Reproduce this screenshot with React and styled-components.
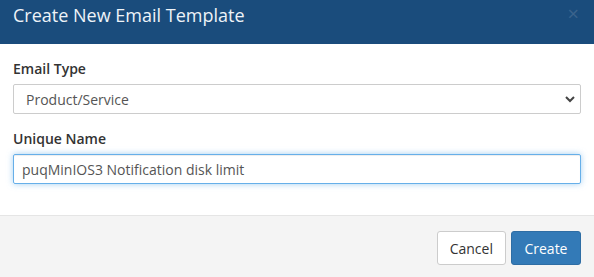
import React from 'react';
import styled, { createGlobalStyle } from 'styled-components';

const GlobalStyle = createGlobalStyle`
  html, body {
    margin: 0;
    padding: 0;
    background: #ffffff;
  }
  body {
    font-family: "Open Sans", "Liberation Sans", sans-serif;
    font-size: 14px;
    color: #333;
  }
`;

const Modal = styled.div`
  width: 594px;
  height: 277px;
  display: flex;
  flex-direction: column;
  background: #fff;
  overflow: hidden;
`;

const Header = styled.div`
  height: 44px;
  box-sizing: border-box;
  background: #1a4c7c;
  display: flex;
  align-items: flex-start;
  justify-content: space-between;
  padding: 2px 13px 0 13px;
`;

const Title = styled.h4`
  margin: 0;
  font-size: 18px;
  font-weight: 400;
  line-height: 26px;
  color: #eef3f8;
`;

const Close = styled.span`
  font-size: 20px;
  line-height: 20px;
  color: #3b638c;
  margin-top: 2px;
  margin-right: 2px;
`;

const Body = styled.div`
  padding: 15px 13px 0 13px;
  height: 172px;
  box-sizing: border-box;
  border-bottom: 1px solid #e5e5e5;
`;

const Group = styled.div`
  margin-bottom: 15px;
`;

const Label = styled.label`
  display: block;
  font-weight: 600;
  font-size: 14px;
  line-height: 20px;
  margin-bottom: 5px;
  color: #333;
`;

const SelectBox = styled.div`
  height: 30px;
  box-sizing: border-box;
  border: 1px solid #ccc;
  border-radius: 2px;
  display: flex;
  align-items: center;
  justify-content: space-between;
  padding: 0 4px 0 12px;
  font-size: 14px;
  color: #555;
`;

const Input = styled.div`
  height: 30px;
  box-sizing: border-box;
  border: 1px solid #66afe9;
  border-radius: 2px;
  display: flex;
  align-items: center;
  padding: 0 8px;
  font-size: 14px;
  color: #555;
  box-shadow: inset 0 1px 1px rgba(0, 0, 0, 0.075), 0 0 6px rgba(102, 175, 233, 0.6);
`;

const Footer = styled.div`
  flex: 1;
  background: #f4f4f4;
  display: flex;
  justify-content: flex-end;
  align-items: flex-start;
  gap: 5px;
  padding: 15px 13px 0 0;
`;

const Button = styled.button`
  height: 34px;
  box-sizing: border-box;
  padding: 0 ${p => (p.$primary ? '12.5px' : '12px')};
  border-radius: 3px;
  font-family: inherit;
  font-size: 14px;
  border: 1px solid ${p => (p.$primary ? '#2e6da4' : '#ccc')};
  background: ${p => (p.$primary ? '#337ab7' : '#fff')};
  color: ${p => (p.$primary ? '#fff' : '#333')};
`;

const Chevron = () => (
  <svg width="12" height="12" viewBox="0 0 12 12">
    <path d="M2 4 L6 8 L10 4" fill="none" stroke="#444" strokeWidth="2" />
  </svg>
);

export default function App() {
  return (
    <>
      <GlobalStyle />
      <Modal>
        <Header>
          <Title>Create New Email Template</Title>
          <Close>×</Close>
        </Header>
        <Body>
          <Group>
            <Label>Email Type</Label>
            <SelectBox>
              <span>Product/Service</span>
              <Chevron />
            </SelectBox>
          </Group>
          <Group>
            <Label>Unique Name</Label>
            <Input>puqMinIOS3 Notification disk limit</Input>
          </Group>
        </Body>
        <Footer>
          <Button>Cancel</Button>
          <Button $primary>Create</Button>
        </Footer>
      </Modal>
    </>
  );
}
